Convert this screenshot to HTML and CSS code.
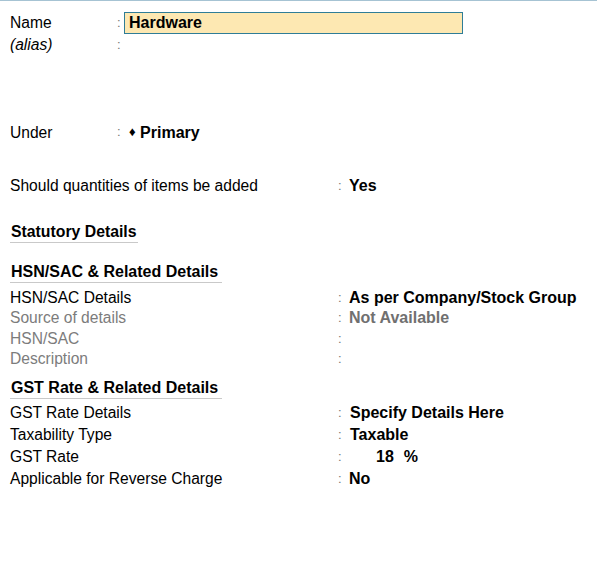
FILE: index.html
```html
<!DOCTYPE html>
<html lang="en">
<head>
  <meta charset="UTF-8">
  <title>Stock Group Creation</title>
  <link rel="stylesheet" href="styles.css">
</head>
<body>

<div class="frame">

  <!-- Name / alias / under -->
  <div class="head-rows">
    <div class="row-top">
      <span class="label">Name</span>
      <span class="colon">:</span>
      <div class="name-input">Hardware</div>
    </div>
    <div class="row-top">
      <span class="label alias">(alias)</span>
      <span class="colon">:</span>
      <span></span>
    </div>
    <div class="row-top under">
      <span class="label">Under</span>
      <span class="colon">:</span>
      <span class="value"><span class="diamond">&#9830;</span> Primary</span>
    </div>
  </div>

  <div class="row qty">
    <span class="label">Should quantities of items be added</span>
    <span class="colon">:</span>
    <span class="value">Yes</span>
  </div>

  <!-- Statutory -->
  <div class="section-title statutory"><span>Statutory Details</span></div>

  <div class="section-title hsn"><span>HSN/SAC &amp; Related Details</span></div>
  <div class="group hsn-rows">
    <div class="row">
      <span class="label">HSN/SAC Details</span>
      <span class="colon">:</span>
      <span class="value">As per Company/Stock Group</span>
    </div>
    <div class="row muted">
      <span class="label">Source of details</span>
      <span class="colon">:</span>
      <span class="value">Not Available</span>
    </div>
    <div class="row muted">
      <span class="label">HSN/SAC</span>
      <span class="colon">:</span>
      <span class="value"></span>
    </div>
    <div class="row muted">
      <span class="label">Description</span>
      <span class="colon">:</span>
      <span class="value"></span>
    </div>
  </div>

  <div class="section-title gst"><span>GST Rate &amp; Related Details</span></div>
  <div class="group gst-rows">
    <div class="row">
      <span class="label">GST Rate Details</span>
      <span class="colon">:</span>
      <span class="value">Specify Details Here</span>
    </div>
    <div class="row">
      <span class="label">Taxability Type</span>
      <span class="colon">:</span>
      <span class="value">Taxable</span>
    </div>
    <div class="row">
      <span class="label">GST Rate</span>
      <span class="colon">:</span>
      <span class="value"><span class="rate">18</span><span class="pct">%</span></span>
    </div>
    <div class="row">
      <span class="label">Applicable for Reverse Charge</span>
      <span class="colon">:</span>
      <span class="value no">No</span>
    </div>
  </div>

</div>

</body>
</html>
```

FILE: styles.css
```css
body {
  margin: 0;
  background: #fff;
  font-family: Arial, "Liberation Sans", sans-serif;
  color: #000;
}
.frame {
  border-top: 1px solid #a6c3d3;
  height: 562px;
  padding-left: 10px;
}
.label {
  font-size: 15.6px;
  white-space: nowrap;
}
.alias {
  font-style: italic;
}
.colon {
  font-size: 13px;
  color: #777;
}
.value {
  font-size: 16px;
  font-weight: bold;
  white-space: nowrap;
}

/* top block */
.head-rows {
  margin-top: 11px;
}
.row-top {
  display: grid;
  grid-template-columns: 107px 7px 339px;
  height: 22px;
  line-height: 22px;
}
.row-top.under {
  margin-top: 65px;
}
.row-top.under .label {
  position: relative;
  top: 1px;
}
.name-input {
  box-sizing: border-box;
  height: 22px;
  line-height: 20px;
  border: 1px solid #2f7d97;
  background: #fde8b2;
  padding-left: 4px;
  font-size: 16px;
  font-weight: bold;
}
.diamond {
  font-size: 13px;
  vertical-align: 2px;
  margin-left: 5px;
}

/* label : value rows */
.row {
  display: grid;
  grid-template-columns: 328px 11px auto;
  height: 22px;
  line-height: 22px;
}
.row.qty {
  margin-top: 32px;
}
.hsn-rows .row {
  height: 20.3px;
  line-height: 20px;
}
.hsn-rows {
  margin-top: 5px;
}
.gst-rows {
  margin-top: 3px;
}
.muted .label {
  color: #7c7c7c;
}
.muted .value {
  color: #707070;
}
.gst-rows .value {
  padding-left: 1px;
}
.gst-rows .value.no {
  padding-left: 0;
}
.rate {
  margin-left: 26px;
}
.pct {
  margin-left: 10px;
}

/* section headings */
.section-title span {
  display: inline-block;
  font-size: 16px;
  font-weight: bold;
  height: 20px;
  line-height: 20px;
  padding: 0 4px 0 1px;
  border-bottom: 1px solid #c9c9c9;
}
.section-title.statutory {
  margin-top: 25px;
}
.section-title.statutory span {
  font-size: 15.8px;
  padding-right: 1px;
}
.section-title.hsn {
  margin-top: 19px;
}
.section-title.gst {
  margin-top: 9px;
}
```
